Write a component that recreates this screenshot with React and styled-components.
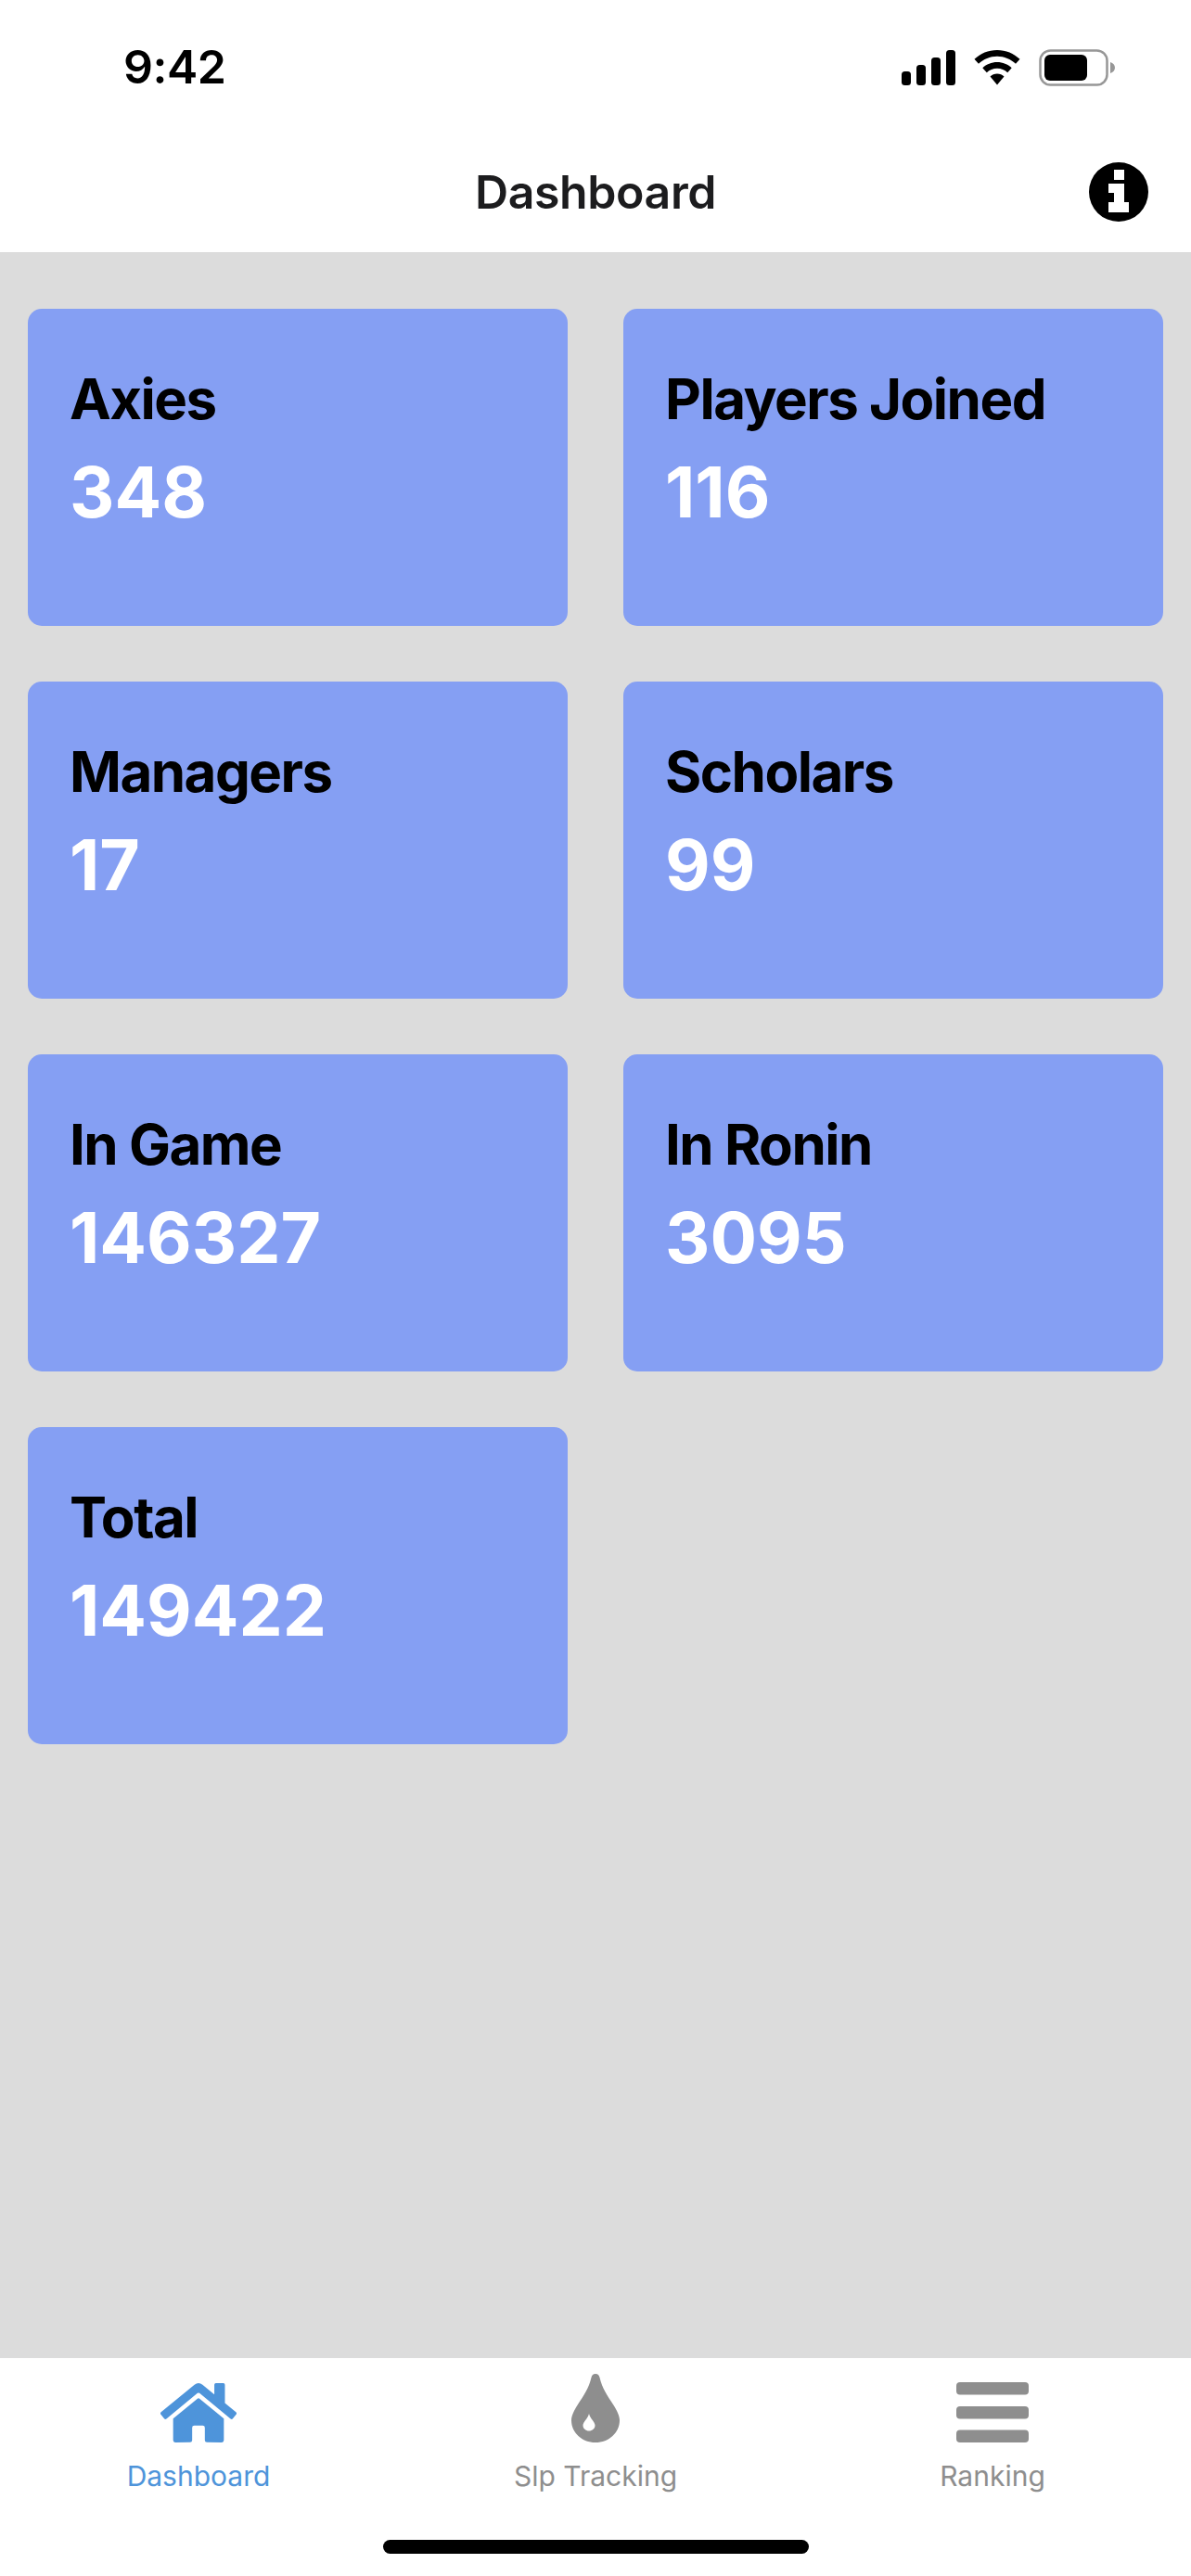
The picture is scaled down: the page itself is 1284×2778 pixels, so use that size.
import React from 'react';
import styled, { createGlobalStyle } from 'styled-components';
import { FaHome } from 'react-icons/fa';

const GlobalStyle = createGlobalStyle`
  html, body {
    margin: 0;
    padding: 0;
    background: #fff;
  }
  * {
    box-sizing: border-box;
  }
`;

const Screen = styled.div`
  position: relative;
  display: flex;
  flex-direction: column;
  width: 1284px;
  height: 2778px;
  font-family: Inter, "Liberation Sans", sans-serif;
  background: #dcdcdc;
  overflow: hidden;
`;

const StatusBar = styled.div`
  display: flex;
  align-items: center;
  justify-content: space-between;
  height: 146px;
  padding: 0 82px 0 133px;
  background: #fff;
`;

const Time = styled.span`
  margin-bottom: 2px;
  font-size: 50px;
  font-weight: 600;
  letter-spacing: -0.5px;
  color: #000;
`;

const StatusIcons = styled.div`
  display: flex;
  align-items: center;
  gap: 20px;
`;

const NavBar = styled.div`
  position: relative;
  display: flex;
  align-items: center;
  justify-content: center;
  height: 127px;
  background: #fff;
  border-bottom: 1px solid #d8d8d8;
`;

const NavTitle = styled.h1`
  margin: 0 0 4px;
  font-size: 50px;
  font-weight: 600;
  letter-spacing: -0.4px;
  color: #1c1c1e;
`;

const InfoButton = styled.div`
  position: absolute;
  right: 46px;
  top: 29px;
  display: flex;
`;

const Grid = styled.main`
  flex: 1;
  display: grid;
  grid-template-columns: 582px 582px;
  grid-auto-rows: 342px;
  align-content: start;
  gap: 60px;
  padding: 60px 30px 0;
`;

const Card = styled.div`
  padding: 61px 46px 0;
  background: #859ff3;
  border-radius: 15px;
`;

const CardLabel = styled.div`
  margin-left: -1px;
  font-size: 60px;
  line-height: 72px;
  font-weight: 700;
  letter-spacing: -1.5px;
  color: #000;
`;

const CardValue = styled.div`
  margin-top: 29px;
  margin-left: -1px;
  font-size: 75px;
  line-height: 72px;
  font-weight: 700;
  color: #fff;
`;

const TabBar = styled.nav`
  display: grid;
  grid-template-columns: repeat(3, 1fr);
  height: 236px;
  padding-top: 17px;
  background: #fff;
  border-top: 1px solid #dcdcdc;
`;

const Tab = styled.div`
  display: flex;
  flex-direction: column;
  align-items: center;
  color: ${(p) => (p.$active ? '#4e94da' : '#8e8e8e')};
`;

const TabIcon = styled.div`
  display: flex;
  align-items: flex-end;
  justify-content: center;
  height: 74px;
`;

const HomeGlyph = styled(FaHome)`
  width: 82px;
  height: 82px;
  margin-bottom: -9px;
`;

const TabLabel = styled.span`
  margin-top: 18px;
  font-size: 30px;
  line-height: 36px;
  font-weight: 400;
`;

const HomeIndicator = styled.div`
  position: absolute;
  left: 413px;
  top: 2739px;
  width: 459px;
  height: 15px;
  background: #000;
  border-radius: 8px;
`;

const SignalIcon = () => (
  <svg width="58" height="38" viewBox="0 0 58 38" fill="#000">
    <rect x="0" y="23" width="10" height="15" rx="3.5" />
    <rect x="16" y="16" width="10" height="22" rx="3.5" />
    <rect x="32" y="8" width="10" height="30" rx="3.5" />
    <rect x="48" y="0" width="10" height="38" rx="3.5" />
  </svg>
);

const WifiIcon = () => (
  <svg width="50" height="38" viewBox="0 0 50 38" fill="#000">
    <path d="M25 0C15.500 0 7 3.700 0.500 9.800L5 14.800C10.300 9.800 17.300 6.800 25 6.800S39.700 9.800 45 14.800L49.500 9.800C43 3.700 34.500 0 25 0Z" />
    <path d="M25 13C19 13 13.500 15.300 9.300 19.200L13.800 24.200C16.800 21.500 20.700 19.800 25 19.800S33.200 21.500 36.200 24.200L40.700 19.200C36.500 15.300 31 13 25 13Z" />
    <path d="M25 25.500C22 25.500 19.500 26.500 17.500 28.400L25 37.500L32.500 28.400C30.500 26.500 28 25.500 25 25.500Z" />
  </svg>
);

const BatteryIcon = () => (
  <svg width="82" height="40" viewBox="0 0 82 40">
    <rect x="1.500" y="1.500" width="72" height="37" rx="11" fill="none" stroke="#979797" strokeWidth="2.500" />
    <rect x="6" y="6" width="46" height="28" rx="6" fill="#000" />
    <path d="M77 14C80 15 82 17 82 20S80 25 77 26Z" fill="#979797" />
  </svg>
);

const InfoIcon = () => (
  <svg width="64" height="64" viewBox="0 0 64 64">
    <path
      fill="#000"
      fillRule="evenodd"
      d="M32 0A32 32 0 1 1 32 64A32 32 0 1 1 32 0ZM27 8V19H38V8ZM21 23V33H27V43H21V54H43V43H38V23Z"
    />
  </svg>
);

const DropIcon = () => (
  <svg width="52" height="74" viewBox="0 0 52 74">
    <path
      fill="#8e8e8e"
      fillRule="evenodd"
      d="M26 0C29 0 30 2 30.500 4C33 15 39 24 45 33C49.500 40 52 45.500 52 50C52 63.500 40.500 74 26 74S0 63.500 0 50C0 45.500 2.500 40 7 33C13 24 19 15 21.500 4C22 2 23 0 26 0ZM19 43C20 48 25.500 52 25.500 55.500C25.500 59 22.500 61.500 19 61.500S12.500 59 12.500 55.500C12.500 52 18 48 19 43Z"
    />
  </svg>
);

const BarsIcon = () => (
  <svg width="78" height="65" viewBox="0 0 78 65" fill="#8e8e8e">
    <rect x="0" y="0" width="78" height="13.500" rx="4" />
    <rect x="0" y="26" width="78" height="13.500" rx="4" />
    <rect x="0" y="51.500" width="78" height="13.500" rx="4" />
  </svg>
);

const stats = [
  { label: 'Axies', value: '348' },
  { label: 'Players Joined', value: '116' },
  { label: 'Managers', value: '17' },
  { label: 'Scholars', value: '99' },
  { label: 'In Game', value: '146327' },
  { label: 'In Ronin', value: '3095' },
  { label: 'Total', value: '149422' },
];

function App() {
  return (
    <Screen>
      <GlobalStyle />
      <StatusBar>
        <Time>9:42</Time>
        <StatusIcons>
          <SignalIcon />
          <WifiIcon />
          <BatteryIcon />
        </StatusIcons>
      </StatusBar>
      <NavBar>
        <NavTitle>Dashboard</NavTitle>
        <InfoButton>
          <InfoIcon />
        </InfoButton>
      </NavBar>
      <Grid>
        {stats.map((s) => (
          <Card key={s.label}>
            <CardLabel>{s.label}</CardLabel>
            <CardValue>{s.value}</CardValue>
          </Card>
        ))}
      </Grid>
      <TabBar>
        <Tab $active>
          <TabIcon>
            <HomeGlyph />
          </TabIcon>
          <TabLabel>Dashboard</TabLabel>
        </Tab>
        <Tab>
          <TabIcon>
            <DropIcon />
          </TabIcon>
          <TabLabel>Slp Tracking</TabLabel>
        </Tab>
        <Tab>
          <TabIcon>
            <BarsIcon />
          </TabIcon>
          <TabLabel>Ranking</TabLabel>
        </Tab>
      </TabBar>
      <HomeIndicator />
    </Screen>
  );
}

export default App;
